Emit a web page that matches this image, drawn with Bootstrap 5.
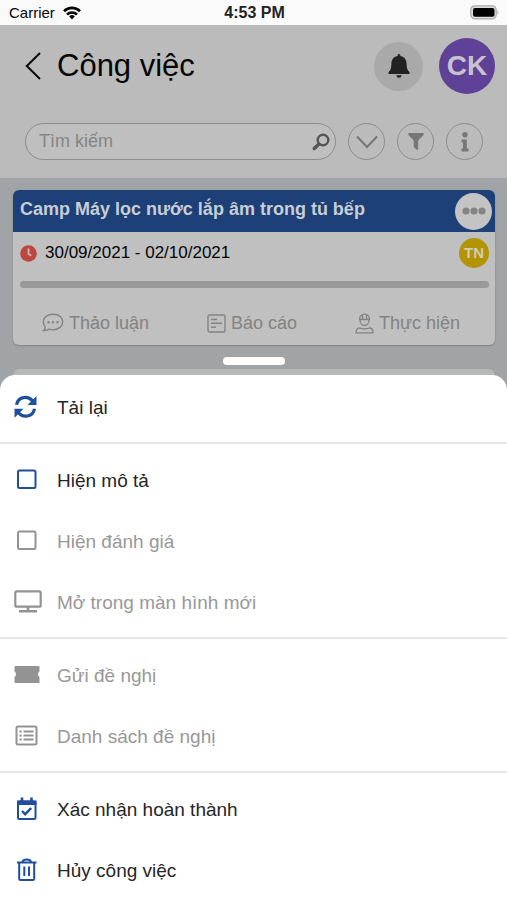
<!DOCTYPE html>
<html lang="vi">
<head>
<meta charset="utf-8">
<meta name="viewport" content="width=device-width, initial-scale=1">
<title>Công việc</title>
<link href="https://cdn.jsdelivr.net/npm/bootstrap@5.3.0/dist/css/bootstrap.min.css" rel="stylesheet">
<style>
body { font-family: "Liberation Sans", Arial, sans-serif; background: #a0a4a6; color: #050505; min-height: 100vh; overflow: hidden; }
svg { display: block; flex-shrink: 0; }
button { font-family: inherit; border: 0; padding: 0; background: none; }
.status { background: #fafafa; font-size: 15px; line-height: 25px; padding: 0 7px 0 9px; }
.status-side { flex: 1 1 0; }
.status-time { font-size: 16px; font-weight: 700; color: #222; }
.topbar { background: #bbb; padding: 13px 12px 18px 25px; }
.title { font-size: 31px; line-height: 56px; font-weight: 400; }
.round { border-radius: 50%; display: flex; align-items: center; justify-content: center; flex-shrink: 0; }
.bell { width: 49px; height: 49px; background: #a9a9a9; color: #222; }
.user { width: 56px; height: 56px; background: #5f4197; color: #c8c2d0; font-size: 28px; font-weight: 700; }
.tools { padding: 29px 12px 0 0; gap: 12px; }
.search { height: 37px; border: 1px solid #8c8c8c; border-radius: 19px; background: #bfbfbf; padding: 0 5px 0 13px; }
.search input { border: 0; background: transparent; outline: 0; font-size: 18px; color: #333; padding: 0; min-width: 0; }
.search input::placeholder { color: #858585; opacity: 1; }
.tool { width: 37px; height: 37px; border: 1px solid #8c8c8c; color: #777; }
.tasks { padding: 12px 12px 0 13px; }
.task { background: #c0c0c0; border-radius: 6px; box-shadow: 0 1px 2px #7d8183; overflow: hidden; }
.task-head { background: #1c4077; color: #c9ced6; height: 42px; padding: 0 3px 0 7px; }
.task-head h2 { font-size: 18px; line-height: 38px; font-weight: 700; }
.task-body { padding: 6px 6px 4px 7px; }
.more { width: 37px; height: 37px; background: #c4c4c4; color: #858585; }
.date { font-size: 17px; line-height: 30px; }
.member { width: 30px; height: 30px; background: #b39405; color: #d0ccb8; font-size: 15px; font-weight: 700; }
.track { height: 7px; border-radius: 4px; background: #999; margin: 13px 0 17px; }
.acts { padding: 0 29px 0 22px; }
.act { color: #838383; font-size: 18px; line-height: 36px; display: flex; align-items: center; gap: 5px; }
.next-task { margin-top: 24px; height: 40px; background: #b7b8b8; }
.sheet { background: #fff; border-radius: 15px 15px 0 0; padding-top: 1px; }
.grip { width: 62px; height: 8px; border-radius: 4px; background: #fff; margin: 0 auto 10px; }
.group + .group { border-top: 2px solid #e6e6e6; margin-top: 5px; padding-top: 5px; }
.item { display: flex; align-items: center; width: 100%; height: 61px; padding: 4px 0 0 14px; font-size: 19px; color: #262626; text-align: left; }
.item:disabled { color: #989898; }
.item-icon { width: 43px; padding-bottom: 4px; color: #1f4f9c; flex-shrink: 0; }
.item:disabled .item-icon { color: #939393; }
</style>
</head>
<body>
<div class="status d-flex align-items-center">
  <div class="status-side d-flex align-items-center gap-2">
    <span>Carrier</span>
    <svg width="18" height="14" viewBox="0 0 18 14" fill="none" stroke="#080808" stroke-width="2.6"><path d="M1 5.2a11.4 11.4 0 0 1 16 0M4 8.5a7.2 7.2 0 0 1 10 0"/><path d="M6.2 10.4a4 4 0 0 1 5.6 0L9 13.4z" fill="#080808" stroke="none"/></svg>
  </div>
  <span class="status-time">4:53 PM</span>
  <div class="status-side d-flex justify-content-end">
    <svg width="30" height="15" viewBox="0 0 30 15"><rect x=".8" y=".8" width="25.4" height="13" rx="4" fill="#ddd" stroke="#aaa" stroke-width="1.2"/><rect x="3" y="3" width="21.500" height="8.800" rx="2" fill="#000"/><path d="M27.500 5q2 2.300 0 4.600z" fill="#aaa"/></svg>
  </div>
</div>

<header class="topbar">
  <div class="d-flex align-items-center">
    <button type="button" aria-label="Quay lại"><svg width="32" height="28" viewBox="0 0 32 28" fill="none" stroke="#0a0a0a" stroke-width="2"><path d="M15 1 1.800 14 15 27"/></svg></button>
    <h1 class="title m-0 flex-grow-1">Công việc</h1>
    <button type="button" class="round bell me-3" aria-label="Thông báo"><svg width="24" height="26" viewBox="0 0 24 26" fill="currentColor"><path d="M12 1q1.500 0 1.500 1.900c4.200.8 6.100 3.900 6.100 8 0 4.200.8 6.300 3 8.300q.5 1.800-1 1.800H2.400q-1.500 0-1-1.800c2.200-2 3-4.100 3-8.300 0-4.100 1.900-7.200 6.100-8Q10.500 1 12 1zM9.200 22.300h5.600q-.7 2.500-2.800 2.500t-2.800-2.500z"/></svg></button>
    <button type="button" class="round user">CK</button>
  </div>
  <div class="tools d-flex align-items-center">
    <form class="search d-flex align-items-center flex-grow-1">
      <input class="flex-grow-1" type="text" placeholder="Tìm kiếm" aria-label="Tìm kiếm">
      <button type="button" aria-label="Tìm"><svg width="18" height="18" viewBox="0 0 18 18" fill="none" stroke="#555"><circle cx="11" cy="7" r="5.300" stroke-width="2.400"/><path d="M7 11 2.300 15.500" stroke-width="3.400" stroke-linecap="round"/></svg></button>
    </form>
    <button type="button" class="round tool" aria-label="Mở rộng"><svg width="22" height="14" viewBox="0 0 22 14" fill="none" stroke="currentColor" stroke-width="2"><path d="m1 1.500 10 10.500L21 1.500"/></svg></button>
    <button type="button" class="round tool" aria-label="Lọc"><svg width="16" height="17" viewBox="0 0 16 17" fill="currentColor"><path d="M.8 0h14.400q1.200 1-.1 2.500L10.200 7.600v8.500q-.7 1.300-2 .2l-2.500-2.200V7.600L.9 2.500Q-.4 1 .8 0z"/></svg></button>
    <button type="button" class="round tool" aria-label="Thông tin"><svg width="8" height="20" viewBox="0 0 8 20" fill="currentColor"><circle cx="4" cy="2.800" r="2.700"/><path d="M.6 7.500h5.200v9H7.500v3H.5v-3H2v-6H.6z"/></svg></button>
  </div>
</header>

<main class="tasks">
  <article class="task">
    <div class="task-head d-flex align-items-center justify-content-between">
      <h2 class="m-0 align-self-start">Camp Máy lọc nước lắp âm trong tủ bếp</h2>
      <button type="button" class="round more" aria-label="Thêm"><svg width="24" height="8" viewBox="0 0 24 8" fill="currentColor"><circle cx="4" cy="4" r="3.600"/><circle cx="12" cy="4" r="3.600"/><circle cx="20" cy="4" r="3.600"/></svg></button>
    </div>
    <div class="task-body">
      <div class="d-flex align-items-center">
        <svg width="17" height="17" viewBox="0 0 17 17"><circle cx="8.500" cy="8.500" r="8.300" fill="#bd463e"/><path d="M8.500 3.500v5.300l2.700 2" fill="none" stroke="#ccb9b7" stroke-width="1.800"/></svg>
        <span class="date flex-grow-1 ps-1 ms-1">30/09/2021 - 02/10/2021</span>
        <span class="round member">TN</span>
      </div>
      <div class="track"></div>
      <div class="acts d-flex justify-content-between">
        <button type="button" class="act"><svg width="22" height="20" viewBox="0 0 22 20" fill="none" stroke="currentColor" stroke-width="1.400"><path d="M2.800 13C.8 11 .8 6.600 3 4.300 6.600.3 15 .2 18.800 3.900c2.700 2.800 2.500 7.600-.5 10.200-3 2.700-7.500 3-11 2-1.700 1.200-3.600 1.700-5.700 1.500C3 16.400 3.400 14.800 2.800 13z"/><g fill="currentColor" stroke="none"><circle cx="6.500" cy="9.200" r="1.200"/><circle cx="11" cy="9.200" r="1.200"/><circle cx="15.500" cy="9.200" r="1.200"/></g></svg>Thảo luận</button>
        <button type="button" class="act"><svg width="19" height="19" viewBox="0 0 19 19" fill="none" stroke="currentColor" stroke-width="1.400"><rect x="1" y="1" width="17" height="17" rx="1.500"/><path d="M4 5.500h6M4 9.300h11M4 13.200h5"/></svg>Báo cáo</button>
        <button type="button" class="act"><svg width="19" height="21" viewBox="0 0 19 21" fill="none" stroke="currentColor" stroke-width="1.300"><path d="M4.500 6.500C4.500-.8 14.500-.8 14.500 6.500zM5 6.500c0 8 9 8 9 0M7.500 1.800v4.700M11.500 1.800v4.700M1 19.800c0-3 1-4.800 3.500-4.800 3 1 7 1 10 0 2.500 0 3.500 1.800 3.500 4.800z"/></svg>Thực hiện</button>
      </div>
    </div>
  </article>
  <div class="task next-task"></div>
</main>

<div class="fixed-bottom">
  <div class="grip"></div>
  <nav class="sheet" aria-label="Tùy chọn công việc">
    <div class="group">
      <button type="button" class="item"><span class="item-icon"><svg width="23" height="24" viewBox="0 0 23 24" fill="none" stroke="currentColor" stroke-width="3.200"><path d="M2.500 9.800C4 1.500 14 .3 18.500 6M20.500 13.800C19 22 9 23.400 4.500 17.700"/><path d="M22.500 1v9h-9zM.5 22.700v-9h9z" fill="currentColor" stroke="none"/></svg></span>Tải lại</button>
    </div>
    <div class="group">
      <button type="button" class="item"><span class="item-icon"><svg width="24" height="22" viewBox="0 0 24 22" fill="none" stroke="currentColor" stroke-width="2"><rect x="4" y="1.500" width="17.500" height="17.500" rx="1.500"/></svg></span>Hiện mô tả</button>
      <button type="button" class="item" disabled><span class="item-icon"><svg width="24" height="22" viewBox="0 0 24 22" fill="none" stroke="currentColor" stroke-width="2"><rect x="4" y="1.500" width="17.500" height="17.500" rx="1.500"/></svg></span>Hiện đánh giá</button>
      <button type="button" class="item" disabled><span class="item-icon"><svg width="28" height="24" viewBox="0 0 28 24" fill="none" stroke="currentColor" stroke-width="2.200"><rect x="1.300" y="1.300" width="25.400" height="15.400" rx="1.500"/><path d="M14 17v4M5 21.300h18" stroke-width="2.600"/></svg></span>Mở trong màn hình mới</button>
    </div>
    <div class="group">
      <button type="button" class="item" disabled><span class="item-icon"><svg width="26" height="20" viewBox="0 0 26 20" fill="currentColor"><path d="M1.500 1h23q1 0 1 1v4.200q-3 3 0 6V17q0 1-1 1h-23q-1 0-1-1v-4.800q3-3 0-6V2q0-1 1-1z"/></svg></span>Gửi đề nghị</button>
      <button type="button" class="item" disabled><span class="item-icon"><svg width="24" height="22" viewBox="0 0 24 22" fill="none" stroke="currentColor" stroke-width="2"><rect x="2.500" y="1.500" width="20" height="18" rx="1.500"/><path d="M9.500 6.500h10M9.500 10.500h10M9.500 14.500h10M5.500 6.500h2.200M5.500 10.500h2.200M5.500 14.500h2.200"/></svg></span>Danh sách đề nghị</button>
    </div>
    <div class="group">
      <button type="button" class="item"><span class="item-icon"><svg width="24" height="24" viewBox="0 0 24 24" fill="none" stroke="currentColor" stroke-width="2"><rect x="4" y="4.500" width="17.500" height="17.500" rx="1.500"/><path d="M3 3.500h19.500v4.500H3z" fill="currentColor" stroke="none"/><path d="M8 .5v4M17.500.5v4" stroke-width="2.600"/><path d="m8 14 3.200 3.200 6-6.200" stroke-width="2.400"/></svg></span>Xác nhận hoàn thành</button>
      <button type="button" class="item"><span class="item-icon"><svg width="24" height="24" viewBox="0 0 24 24" fill="none" stroke="currentColor" stroke-width="2"><path d="M3 4.500h19.500M5.200 4.500v16q0 1.500 1.500 1.500h12q1.500 0 1.500-1.500v-16M8.500 4.500c0-4 8.500-4 8.500 0M10.300 8.500v9.500M15 8.500v9.500"/></svg></span>Hủy công việc</button>
    </div>
  </nav>
</div>
<script src="https://cdn.jsdelivr.net/npm/bootstrap@5.3.0/dist/js/bootstrap.bundle.min.js"></script>
</body>
</html>
